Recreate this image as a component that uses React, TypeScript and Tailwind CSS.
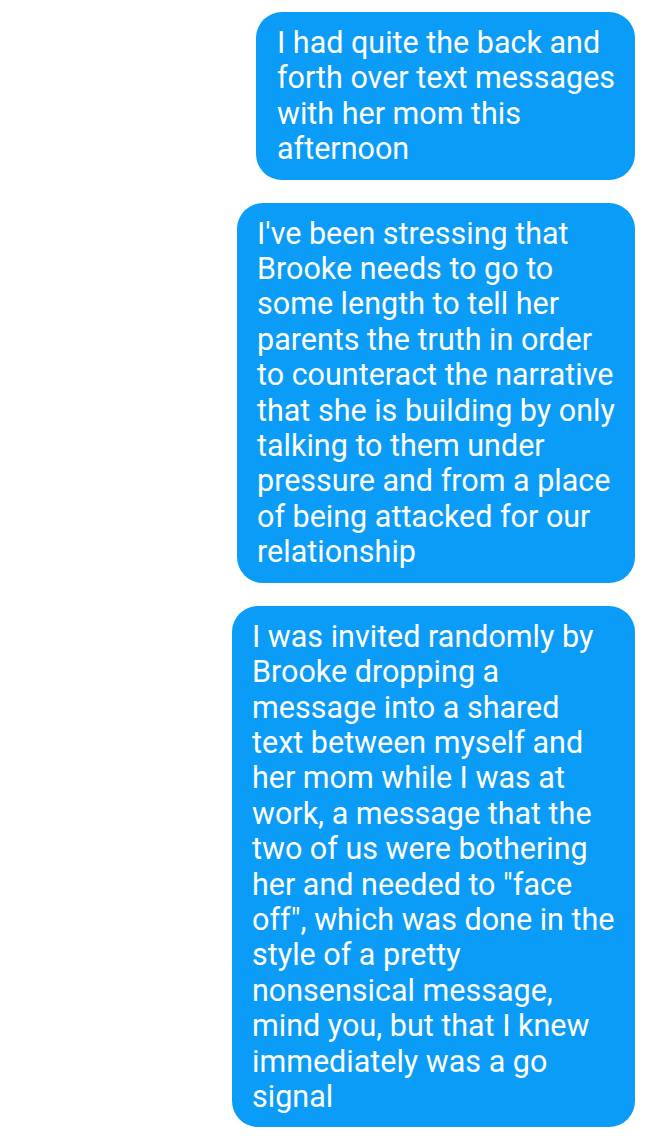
import React from "react";

const messages: { width: string; pad: string; lines: string[] }[] = [
  {
    width: "w-[379px]",
    pad: "pl-[21px]",
    lines: [
      "I had quite the back and",
      "forth over text messages",
      "with her mom this",
      "afternoon",
    ],
  },
  {
    width: "w-[398px]",
    pad: "pl-[20px]",
    lines: [
      "I've been stressing that",
      "Brooke needs to go to",
      "some length to tell her",
      "parents the truth in order",
      "to counteract the narrative",
      "that she is building by only",
      "talking to them under",
      "pressure and from a place",
      "of being attacked for our",
      "relationship",
    ],
  },
  {
    width: "w-[403px]",
    pad: "pl-[20px]",
    lines: [
      "I was invited randomly by",
      "Brooke dropping a",
      "message into a shared",
      "text between myself and",
      "her mom while I was at",
      "work, a message that the",
      "two of us were bothering",
      "her and needed to \"face",
      "off\", which was done in the",
      "style of a pretty",
      "nonsensical message,",
      "mind you, but that I knew",
      "immediately was a go",
      "signal",
    ],
  },
];

export default function App() {
  return (
    <div className="w-[648px] h-[1140px] bg-white flex flex-col items-end gap-[23px] pt-[12px] pr-[13px] overflow-hidden">
      {messages.map((m, i) => (
        <div
          key={i}
          className={`${m.width} ${m.pad} pr-[10px] py-[13px] rounded-[26px] bg-[#0a9cf7] text-white text-[30.5px] leading-[35.4px] font-['Roboto',sans-serif]`}
        >
          {m.lines.map((l, j) => (
            <div key={j} className="whitespace-nowrap">
              {l}
            </div>
          ))}
        </div>
      ))}
    </div>
  );
}
